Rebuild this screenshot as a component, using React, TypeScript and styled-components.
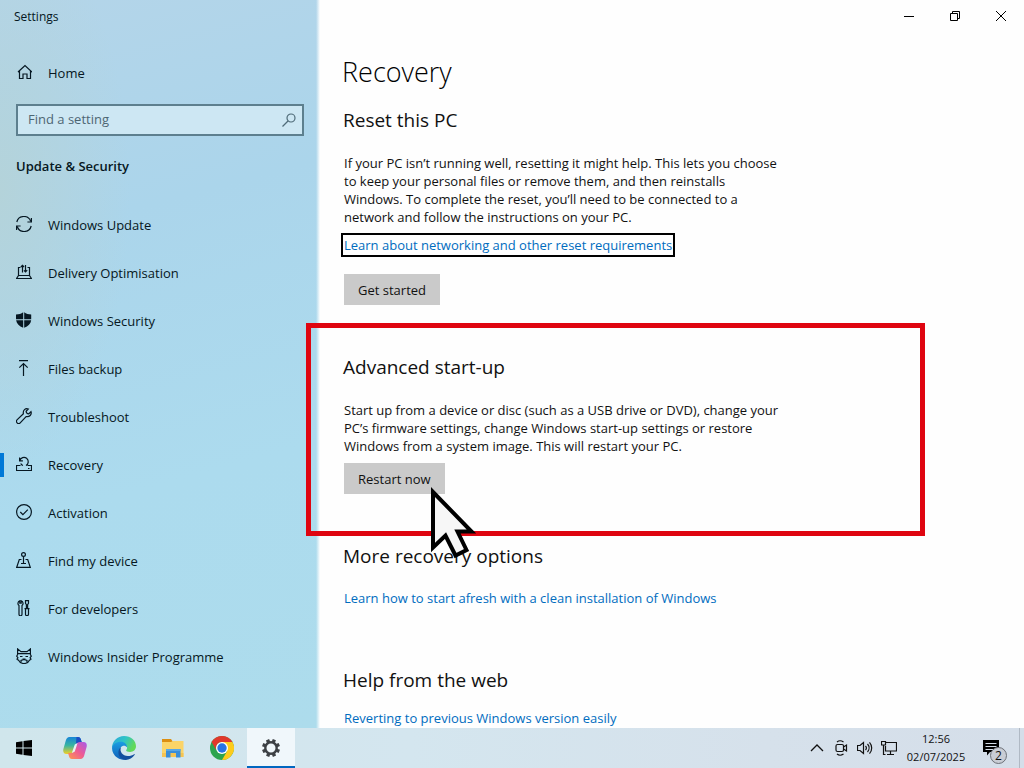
import React from 'react';
import styled, { createGlobalStyle } from 'styled-components';

const GlobalStyle = createGlobalStyle`
  *, *::before, *::after { box-sizing: border-box; }
  body {
    margin: 0;
    color: #111;
    background: #fefefe;
    font: 13px/18px 'Open Sans', 'Noto Sans', sans-serif;
  }
  button, input { font: inherit; color: inherit; }
  h1, h2, p, ul { margin: 0; padding: 0; }
`;

const Shell = styled.div`
  display: flex;
  flex-direction: column;
  min-height: 100vh;
`;

const Window = styled.div`
  flex: 1;
  display: grid;
  grid-template-columns: 320px 1fr;
`;

const Sidebar = styled.aside`
  color: #061722;
  background:
    linear-gradient(to right, transparent calc(100% - 4px), #fefefe),
    radial-gradient(ellipse 130px 280px at 0 190px, #b4d3da, transparent),
    linear-gradient(165deg, #b4d5e9 0, #abd5eb 30%, #acdbee 65%, #addcec 100%);
`;

const AppTitle = styled.div`
  padding: 8px 14px;
  font-size: 12px;
  line-height: 18px;
`;

const NavLink = styled.a<{ $active?: boolean }>`
  display: flex;
  align-items: center;
  gap: 16px;
  height: 48px;
  padding-left: 16px;
  color: inherit;
  text-decoration: none;
  background: ${(p) =>
    p.$active ? 'linear-gradient(#0078d7, #0078d7) left center / 4px 24px no-repeat' : 'none'};

  svg { margin-bottom: 2px; }
`;

const HomeRow = styled.div`
  padding-top: 15px;
`;

const SearchBox = styled.label`
  display: flex;
  align-items: center;
  height: 32px;
  margin: 7px 16px 0;
  padding: 0 5px 0 10px;
  color: #4f6b78;
  background: #cde7f3;
  border: 2px solid #5d7f8e;
`;

const SearchInput = styled.input`
  flex: 1;
  min-width: 0;
  padding: 0 0 2px;
  border: 0;
  outline: 0;
  background: none;
  &::placeholder { color: #4d6673; opacity: 1; }
`;

const SectionName = styled.h2`
  padding: 20px 16px 25px;
  font-size: 13px;
  line-height: 20px;
  font-weight: 600;
`;

const NavList = styled.ul`
  list-style: none;
`;

const Main = styled.main`
  display: flex;
  flex-direction: column;
`;

const WindowControls = styled.div`
  display: flex;
  justify-content: flex-end;
`;

const ControlButton = styled.button`
  display: grid;
  place-items: center;
  width: 46px;
  height: 32px;
  padding: 0;
  border: 0;
  background: none;
`;

const Content = styled.div`
  padding: 22px 24px 0;
`;

const PageTitle = styled.h1`
  font-size: 27px;
  line-height: 36px;
  font-weight: 300;
  margin-left: -2px;
  color: #000;
`;

const Section = styled.section<{ $top: number }>`
  position: relative;
  margin-top: ${(p) => p.$top}px;
`;

const Heading = styled.h2<{ $gap: number }>`
  margin-bottom: ${(p) => p.$gap}px;
  margin-left: -1px;
  font-size: 19px;
  line-height: 28px;
  font-weight: 400;
`;

const Text = styled.p`
  max-width: 440px;
`;

const Link = styled.a`
  display: block;
  width: fit-content;
  line-height: 20px;
  color: #006cbe;
  text-decoration: none;
`;

const FocusedLink = styled(Link)`
  margin: 7px 0 17px -3px;
  padding: 0 1px;
  border: 2px solid #000;
`;

const ActionButton = styled.button`
  display: block;
  height: 31px;
  padding: 0 14px;
  border: 0;
  background: #cacaca;
`;

const RestartButton = styled(ActionButton)`
  margin-top: 8px;
`;

const Highlight = styled.div`
  position: absolute;
  top: -30px;
  bottom: -42px;
  left: -38px;
  width: 619px;
  border: 5px solid #df0510;
  pointer-events: none;
`;

const Pointer = styled.svg`
  position: absolute;
  left: 86px;
  top: 132px;
  z-index: 1;
  pointer-events: none;
`;

const Taskbar = styled.footer`
  display: flex;
  justify-content: space-between;
  height: 40px;
  background: linear-gradient(to right, #d0e6ec, #d4e6ef 40%, #d6e1eb 75%, #d5dee9);
`;

const TaskGroup = styled.div`
  display: flex;
  gap: 1px;
`;

const TaskButton = styled.button<{ $active?: boolean }>`
  display: grid;
  place-items: center;
  width: 48px;
  height: 40px;
  padding: 0;
  border: 0;
  background: ${(p) => (p.$active ? '#f0f7fb' : 'none')};
  box-shadow: ${(p) => (p.$active ? 'inset 0 -2px #0067c0' : 'none')};
`;

const StartButton = styled(TaskButton)`
  margin-right: 2px;
`;

const Tray = styled.div`
  display: flex;
  align-items: stretch;
`;

const TrayButton = styled.button`
  display: grid;
  place-items: center;
  width: 24px;
  padding: 0;
  border: 0;
  background: none;
`;

const Clock = styled.div`
  width: 70px;
  padding-top: 2px;
  font-size: 11px;
  line-height: 18px;
  text-align: center;
`;

const Notices = styled.button`
  position: relative;
  display: grid;
  place-items: center;
  width: 48px;
  padding: 0 8px 0 0;
  border: 0;
  background: none;
`;

const Badge = styled.span`
  position: absolute;
  right: 12px;
  bottom: 4px;
  width: 17px;
  height: 17px;
  border: 1px solid #6d7178;
  border-radius: 50%;
  background: #c9cdd5;
  font-size: 12px;
  line-height: 15px;
  text-align: center;
`;

const ShowDesktop = styled.button`
  width: 5px;
  padding: 0;
  border: 0;
  border-left: 1px solid #b0b9c4;
  background: none;
`;

const Line = ({ children }: { children: React.ReactNode }) => (
  <svg width="16" height="16" viewBox="0 0 16 16" fill="none" stroke="currentColor" strokeWidth="1.2" aria-hidden="true">
    {children}
  </svg>
);

const icons = {
  home: <path d="M2 8 9 1.500 16 8M3.500 7v7.500H7V10h4v4.500h3.500V7" />,
  update: (
    <>
      <path d="M.8 6A7.300 7.300 0 0 1 14.800 5.500M15.200 10A7.300 7.300 0 0 1 1.200 10.500" />
      <path d="M15.400 2v4h-4M.600 14v-4h4" />
    </>
  ),
  delivery: (
    <>
      <path d="M4.500 3.500h-2v8h11v-8h-2M2.500 11.500.6 14.500h14.800l-1.900-3" />
      <path d="M6.500 8.500v-7M4.800 3l1.700-1.700L8 3M9.500 1v7M8 6.300l1.500 1.600 1.700-1.700" />
    </>
  ),
  shield: (
    <g fill="currentColor" stroke="none">
      <path d="M7.200.3v6.900H0V2.500C3 2.500 5.200 1.800 7.200.3ZM8.200.3c2 1.500 4.200 2.200 7 2.200v4.700h-7ZM.1 8.200h7.100v7.600C3.200 14 .8 11.700.1 8.200ZM8.200 8.200h7c-.5 3.500-3 6-7 7.600Z" />
    </g>
  ),
  backup: <path d="M3 .6h9M7.500 16V3.500M3.300 7.700l4.200-4.200 4.200 4.200" />,
  wrench: (
    <path d="M15 3.700c1 2.900-1.500 5.600-4.900 4.900l-5.900 6.200a2.150 2.150 0 0 1-3.200-3l6.400-6C6.700 2.300 9.400-.1 12.300 1L10.100 3.300c.1 1.700.9 2.500 2.600 2.600Z" />
  ),
  recovery: (
    <>
      <path d="M4.500 9.500h-4v5h15v-5h-4M12 12.500h1.500" />
      <path d="M3.600 1.500v3.300h3.300M3.800 4.600A4.300 4.300 0 1 1 10 9.500M4.700 7.500A4.300 4.300 0 0 0 7 9.500" />
    </>
  ),
  activation: (
    <>
      <circle cx="8" cy="8" r="7.400" />
      <path d="m4.300 8 2.600 2.600L11.800 5.700" />
    </>
  ),
  find: (
    <>
      <circle cx="7.500" cy="2.500" r="1.900" />
      <path d="M7.500 4.400v7.100M5.500 7.500H3.300L.700 15.400h13.600l-2.600-7.900H9.500M5 11.500h5" />
    </>
  ),
  developers: (
    <>
      <path d="M3.800.8v2.400h1.400V.8c2.200.9 2.400 3.500.8 4.700v8.800a1.500 1.500 0 0 1-3 0V5.500C1.400 4.300 1.600 1.700 3.800.8Z" />
      <path d="M9.500.600h3v2.800l-.9 1.200v4h-1.200v-4l-.9-1.200ZM8.500 8.600h5M9.500 8.600v5.600a1.500 1.500 0 0 0 3 0V8.600" />
    </>
  ),
  insider: (
    <>
      <path d="M1.600 6.500V.9L5 3.600h6L14.400.9V6.500M1.600 6.500.7 8.200l1.200 1.500-.9 1.500 1.800 1.300c.8 1.900 2.700 3 5.200 3s4.400-1.100 5.200-3l1.800-1.300-.9-1.500 1.200-1.500-.9-1.700" />
      <path d="M2 5.600h12M4 8.500h2.500M9.500 8.500H12M6.500 11h3M5 14.500v-2L8 11.500l3 1v2" />
    </>
  ),
};

const navItems: { label: string; icon: keyof typeof icons; active?: boolean }[] = [
  { label: 'Windows Update', icon: 'update' },
  { label: 'Delivery Optimisation', icon: 'delivery' },
  { label: 'Windows Security', icon: 'shield' },
  { label: 'Files backup', icon: 'backup' },
  { label: 'Troubleshoot', icon: 'wrench' },
  { label: 'Recovery', icon: 'recovery', active: true },
  { label: 'Activation', icon: 'activation' },
  { label: 'Find my device', icon: 'find' },
  { label: 'For developers', icon: 'developers' },
  { label: 'Windows Insider Programme', icon: 'insider' },
];

const CopilotIcon = () => (
  <svg width="24" height="22" viewBox="0 0 24 22" aria-hidden="true">
    <defs>
      <linearGradient id="cpA" x1="0" y1="0" x2="0" y2="1">
        <stop offset="0" stopColor="#1685d8" />
        <stop offset=".5" stopColor="#39b5a0" />
        <stop offset="1" stopColor="#f2cf25" />
      </linearGradient>
      <linearGradient id="cpB" x1="1" y1="0" x2="0" y2="1">
        <stop offset="0" stopColor="#a65bea" />
        <stop offset=".5" stopColor="#ee5b94" />
        <stop offset="1" stopColor="#ff9a4a" />
      </linearGradient>
    </defs>
    <path d="M6.500 0H15c2 0 2.700 1.500 3.200 3.500L19 6h-3c-2 0-3 1-3.600 3l-1.500 5C10.300 16 9 17 7 17H3.500C.5 17-.2 14.500.4 12L2.800 3.500C3.500 1.200 4.500 0 6.500 0Z" fill="url(#cpA)" />
    <path d="M13.500 0H15c2 0 2.700 1.500 3.200 3.500L19 6h-3c-1.500 0-2.500.600-3.200 2Z" fill="#1b4fc4" />
    <path d="M17.500 22H9c-2 0-2.700-1.500-3.200-3.500L5 16h3c2 0 3-1 3.600-3l1.500-5C13.700 6 15 5 17 5h3.500c3 0 3.700 2.500 3.100 5l-2.400 8.500c-.7 2.300-1.700 3.500-3.700 3.500Z" fill="url(#cpB)" />
    <path d="M11.800 7.500 14.500 6l-2.700 8.500-3 1.500Z" fill="#e8f2f6" />
  </svg>
);

const EdgeIcon = () => (
  <svg width="24" height="24" viewBox="0 0 24 24" aria-hidden="true">
    <defs>
      <linearGradient id="edA" x1="0" y1="0" x2="1" y2=".4">
        <stop offset="0" stopColor="#2aa5dd" />
        <stop offset=".55" stopColor="#30c5c5" />
        <stop offset="1" stopColor="#63d957" />
      </linearGradient>
      <linearGradient id="edB" x1="0" y1="0" x2="0" y2="1">
        <stop offset="0" stopColor="#1b9de2" />
        <stop offset="1" stopColor="#0f5fb8" />
      </linearGradient>
    </defs>
    <path d="M0 12C0 5 5.500 0 12 0c7 0 12 4.800 12 10.300 0 3.400-2.600 5.700-5.900 5.700-2.500 0-4-.8-4-1.700 0-.6 1-1 1-2.600 0-2.200-2.300-4.200-5.600-4.200C5.500 7.500 2 9 0 12Z" fill="url(#edA)" />
    <path d="M0 12c.5-4 4.500-6.300 9-6.300 3.600 0 6.100 2.600 6.100 5.600-1-1.300-2.500-1.900-4-1.500C8.500 10.500 7.500 13 8 15.500c.6 3.500 3.500 6.500 7 7.900A12 12 0 0 1 0 12Z" fill="url(#edB)" />
    <path d="M9 11.300c-1.700 4.200 1.500 8.700 6.800 8.700 2.700 0 4.700-.9 6.300-1.800.5-.3.900.1.600.6A12 12 0 0 1 13.500 24C8.500 23 6 19.500 6.500 15.500c.2-1.800 1.100-3.300 2.500-4.200Z" fill="#124f9e" />
  </svg>
);

const FolderIcon = () => (
  <svg width="22" height="19" viewBox="0 0 22 19" aria-hidden="true">
    <path d="M0 0h9l2 3H0Z" fill="#dc8f12" />
    <path d="M0 3h9l2-1h10.500v16H0Z" fill="#fbd468" />
    <path d="M0 14h21.500v4H0Z" fill="#f5c453" />
    <path d="M4 10h14.500v8.500H14V14H8.500v4.500H4Z" fill="#3a8ed8" />
    <path d="M4 10h14.500v2H4Z" fill="#58a7e6" />
  </svg>
);

const ChromeIcon = () => (
  <svg width="24" height="24" viewBox="0 0 24 24" aria-hidden="true">
    <circle cx="12" cy="12" r="12" fill="#2da44f" />
    <path d="M22.400 6A12 12 0 0 1 12 24l5.200-9L12 6Z" fill="#fdcb1c" />
    <path d="M1.600 6A12 12 0 0 1 22.400 6H12a6 6 0 0 0-5.200 9Z" fill="#e0382c" />
    <circle cx="12" cy="12" r="6" fill="#fff" />
    <circle cx="12" cy="12" r="4.700" fill="#2773e5" />
  </svg>
);

const GearIcon = () => (
  <svg width="20" height="20" viewBox="0 0 20 20" fill="none" stroke="#3d4145" aria-hidden="true">
    <circle cx="10" cy="10" r="5.700" strokeWidth="2.400" />
    <g strokeWidth="3.400">
      {[0, 45, 90, 135, 180, 225, 270, 315].map((angle) => (
        <path key={angle} d="M10 1v3" transform={`rotate(${angle + 22} 10 10)`} />
      ))}
    </g>
  </svg>
);

export default function App() {
  return (
    <Shell>
      <GlobalStyle />
      <Window>
        <Sidebar>
          <AppTitle>Settings</AppTitle>
          <HomeRow>
            <NavLink href="#home">
              <Line>{icons.home}</Line>
              Home
            </NavLink>
          </HomeRow>
          <SearchBox>
            <SearchInput type="text" placeholder="Find a setting" aria-label="Find a setting" />
            <Line>
              <circle cx="10" cy="6" r="4" />
              <path d="M7 9 1.500 14.500" />
            </Line>
          </SearchBox>
          <SectionName>Update &amp; Security</SectionName>
          <nav>
            <NavList>
              {navItems.map((item) => (
                <li key={item.label}>
                  <NavLink href="#" $active={item.active}>
                    <Line>{icons[item.icon]}</Line>
                    {item.label}
                  </NavLink>
                </li>
              ))}
            </NavList>
          </nav>
        </Sidebar>
        <Main>
          <WindowControls>
            <ControlButton aria-label="Minimise">
              <svg width="10" height="10" viewBox="0 0 10 10" stroke="#000"><path d="M0 5.500h10" /></svg>
            </ControlButton>
            <ControlButton aria-label="Restore">
              <svg width="10" height="10" viewBox="0 0 10 10" fill="none" stroke="#000">
                <path d="M.5 2.500h7v7h-7ZM2.500 2.500v-2h7v7h-2" />
              </svg>
            </ControlButton>
            <ControlButton aria-label="Close">
              <svg width="10" height="10" viewBox="0 0 10 10" stroke="#000"><path d="m0 0 10 10M10 0 0 10" /></svg>
            </ControlButton>
          </WindowControls>
          <Content>
            <PageTitle>Recovery</PageTitle>
            <Section $top={16}>
              <Heading $gap={20}>Reset this PC</Heading>
              <Text>
                If your PC isn’t running well, resetting it might help. This lets you choose to keep your personal
                files or remove them, and then reinstalls Windows. To complete the reset, you’ll need to be connected
                to a network and follow the instructions on your PC.
              </Text>
              <FocusedLink href="#">Learn about networking and other reset requirements</FocusedLink>
              <ActionButton>Get started</ActionButton>
            </Section>
            <Section $top={48}>
              <Heading $gap={20}>Advanced start-up</Heading>
              <Text>
                Start up from a device or disc (such as a USB drive or DVD), change your PC’s firmware settings,
                change Windows start-up settings or restore Windows from a system image. This will restart your PC.
              </Text>
              <RestartButton>Restart now</RestartButton>
              <Highlight />
              <Pointer width="46" height="74" viewBox="0 0 46 74" aria-hidden="true">
                <path d="M3 7v55.500l12.500-12 10 20 11-5.500L27.500 46.500H41.500Z" fill="#f7f7f7" stroke="#000" strokeWidth="4" />
              </Pointer>
            </Section>
            <Section $top={48}>
              <Heading $gap={18}>More recovery options</Heading>
              <Link href="#">Learn how to start afresh with a clean installation of Windows</Link>
            </Section>
            <Section $top={58}>
              <Heading $gap={14}>Help from the web</Heading>
              <Link href="#">Reverting to previous Windows version easily</Link>
            </Section>
          </Content>
        </Main>
      </Window>
      <Taskbar>
        <TaskGroup>
          <StartButton aria-label="Start">
            <svg width="16" height="16" viewBox="0 0 16 16" fill="#000">
              <path d="M0 2.200 6.500 1.300v6.200H0ZM7.500 1.100 16 0v7.500H7.500ZM0 8.500h6.500v6.200L0 13.800ZM7.500 8.500H16V16l-8.500-1.100Z" />
            </svg>
          </StartButton>
          <TaskButton aria-label="Copilot"><CopilotIcon /></TaskButton>
          <TaskButton aria-label="Edge"><EdgeIcon /></TaskButton>
          <TaskButton aria-label="File Explorer"><FolderIcon /></TaskButton>
          <TaskButton aria-label="Chrome"><ChromeIcon /></TaskButton>
          <TaskButton aria-label="Settings" $active><GearIcon /></TaskButton>
        </TaskGroup>
        <Tray>
          <TrayButton aria-label="Show hidden icons">
            <Line><path d="m2 11 6-6 6 6" strokeWidth="1.300" /></Line>
          </TrayButton>
          <TrayButton aria-label="Meet now">
            <Line>
              <rect x="3" y="4.500" width="7.500" height="7" rx="1.500" />
              <path d="M10.500 7l3-2v6l-3-2M4 2Q7-.5 10.500 2M4 14Q7 16.500 10.500 14" />
            </Line>
          </TrayButton>
          <TrayButton aria-label="Volume">
            <Line>
              <path d="M.5 5.500h2.500L6.500 2.500v11L3 10.500H.5ZM8.500 6a3 3 0 0 1 0 4M10.500 4a6 6 0 0 1 0 8M12.500 2.300a8.500 8.500 0 0 1 0 11.400" />
            </Line>
          </TrayButton>
          <TrayButton aria-label="Network">
            <Line>
              <path d="M5 2.500h10.500v8.500H4.500V6M9.500 11v3.500M6 14.500h7M.5 1.500h4V5h-4ZM2.500 5v9.500h2" />
            </Line>
          </TrayButton>
          <Clock>
            <div>12:56</div>
            <div>02/07/2025</div>
          </Clock>
          <Notices aria-label="Notifications">
            <svg width="16" height="16" viewBox="0 0 16 16">
              <path d="M0 0h16v12H7l-3 3.500V12H0Z" fill="#000" />
              <path d="M2.500 3.500h11M2.500 6.500h11M2.500 9.500h8" stroke="#d5dee9" />
            </svg>
            <Badge>2</Badge>
          </Notices>
          <ShowDesktop aria-label="Show desktop" />
        </Tray>
      </Taskbar>
    </Shell>
  );
}
